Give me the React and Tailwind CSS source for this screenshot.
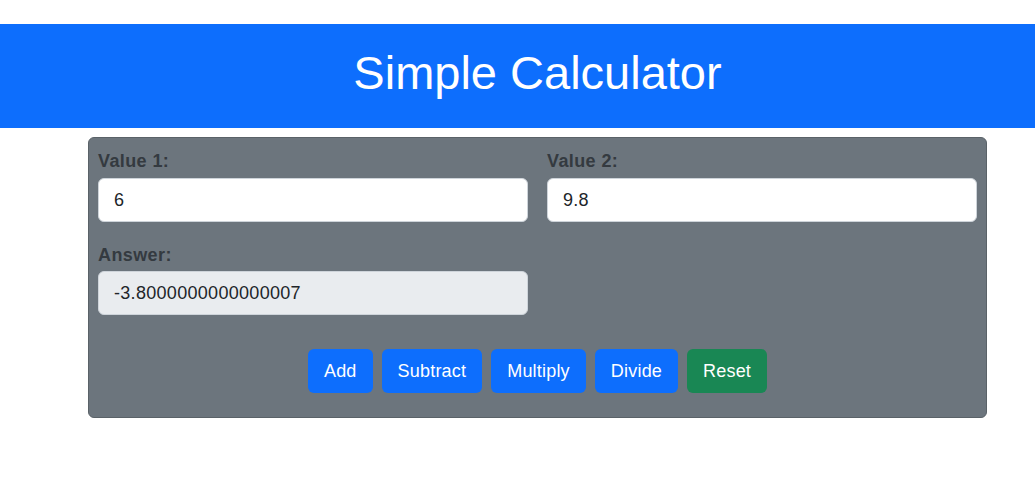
import React from 'react';

function Field({ label, value, readOnly, gap }) {
  return (
    <div className="flex flex-col">
      <label className={'text-[18px] leading-[27px] font-bold tracking-[0.4px] text-[#343a40] ' + gap}>{label}</label>
      <input
        readOnly
        value={value}
        className={
          'h-[44px] w-full rounded-[6px] border border-[#ced4da] px-[15px] text-[18px] tracking-[0.3px] text-[#212529] outline-none ' +
          (readOnly ? 'bg-[#e9ecef]' : 'bg-white')
        }
      />
    </div>
  );
}

export default function App() {
  const buttons = [
    { text: 'Add', cls: 'bg-[#0d6efd]' },
    { text: 'Subtract', cls: 'bg-[#0d6efd]' },
    { text: 'Multiply', cls: 'bg-[#0d6efd]' },
    { text: 'Divide', cls: 'bg-[#0d6efd]' },
    { text: 'Reset', cls: 'bg-[#198754]' },
  ];

  return (
    <div className="min-h-screen bg-white pt-[24px] font-['Liberation_Sans',Arial,sans-serif]">
      <header className="h-[104px] bg-[#0d6efd] flex items-center justify-center pl-[40px] pb-[8px]">
        <h1 className="text-white text-[47px] leading-none">Simple Calculator</h1>
      </header>
      <div className="mx-[88px] mt-[9px] w-[899px] rounded-[6px] border border-[#5a6268] bg-[#6c757d] px-[9px] pt-[10px] pb-[24px]">
        <div className="grid grid-cols-2 gap-x-[19px]">
          <Field label="Value 1:" value="6" gap="mb-[3px]" />
          <Field label="Value 2:" value="9.8" gap="mb-[3px]" />
        </div>
        <div className="grid grid-cols-2 gap-x-[19px] mt-[20px]">
          <Field label="Answer:" value="-3.8000000000000007" readOnly gap="mb-[2px]" />
        </div>
        <div className="mt-[34px] flex justify-center gap-[9px]">
          {buttons.map((b) => (
            <button
              key={b.text}
              className={'h-[44px] rounded-[6px] px-[16px] text-[18px] tracking-[0.2px] text-white ' + b.cls}
            >
              {b.text}
            </button>
          ))}
        </div>
      </div>
    </div>
  );
}
